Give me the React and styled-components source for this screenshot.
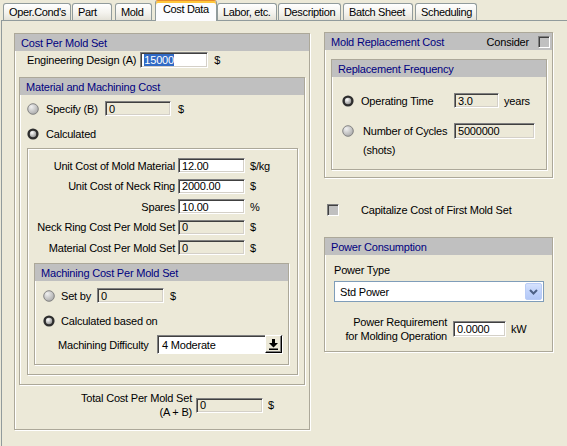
import React from 'react';
import styled, { createGlobalStyle, css } from 'styled-components';

const GlobalStyle = createGlobalStyle`
  html, body { margin: 0; padding: 0; background: #ECE9D8; }
  body {
    font-family: "Liberation Sans", Arial, sans-serif;
    font-size: 11px;
    letter-spacing: -0.2px;
    color: #000;
  }
`;

const Window = styled.div`
  width: 567px;
  height: 446px;
  background: #ECE9D8;
  overflow: hidden;
  display: flex;
  flex-direction: column;
`;

const TabStrip = styled.div`
  display: flex;
  align-items: flex-end;
  height: 20px;
  padding-left: 3px;
  position: relative;
  z-index: 1;
`;

const Tab = styled.div`
  box-sizing: border-box;
  flex: none;
  width: ${p => p.$w}px;
  height: 17px;
  margin-left: ${p => p.$ml}px;
  border: 1px solid #919B9C;
  border-bottom: none;
  border-radius: 3px 3px 0 0;
  background: linear-gradient(#FFFFFF, #F4F3EE 55%, #E4E2D8);
  padding-left: 5px;
  line-height: 16px;
  letter-spacing: -0.35px;
  white-space: nowrap;
  overflow: hidden;
  ${p => p.$active && css`
    height: 21px;
    margin-bottom: -1px;
    padding-left: 7px;
    line-height: 13px;
    background: #FCFCFE;
    border-top: 1px solid #E68B2C;
    box-shadow: inset 0 2px 0 #FFC73C;
    padding-top: 2px;
  `}
`;

const Panel = styled.div`
  flex: 1;
  margin-left: 1px;
  border-top: 1px solid #919B9C;
  border-left: 1px solid #919B9C;
  padding: 12px 0 0 12px;
  display: flex;
  gap: 14px;
  align-items: flex-start;
`;

const Frame = styled.div`
  box-sizing: border-box;
  display: flex;
  flex-direction: column;
  border: 1px solid #ACA899;
  box-shadow: inset 1px 1px 0 #fff, 1px 1px 0 #fff;
  width: ${p => (p.$w ? `${p.$w}px` : 'auto')};
  margin: ${p => p.$m || '0'};
  padding-bottom: ${p => p.$pb || 0}px;
`;

const Band = styled.div`
  height: 17px;
  background: #C0C0C0;
  color: #00007F;
  padding: 0 ${p => p.$pr ?? 6}px 0 6px;
  display: flex;
  align-items: center;
  justify-content: space-between;
  white-space: nowrap;
`;

const BandRight = styled.div`
  display: flex;
  align-items: center;
  gap: 9px;
  color: #000;
`;

const Row = styled.div`
  display: flex;
  align-items: center;
  margin-top: ${p => p.$mt || 0}px;
  padding-left: ${p => p.$pl || 0}px;
  min-height: ${p => p.$h || 15}px;
`;

const Label = styled.span`
  flex: none;
  white-space: nowrap;
  width: ${p => (p.$w ? `${p.$w}px` : 'auto')};
  margin-left: ${p => p.$ml || 0}px;
  text-align: ${p => p.$right ? 'right' : 'left'};
  line-height: 14px;
`;

const Unit = styled.span`
  margin-left: ${p => p.$ml || 0}px;
  white-space: nowrap;
`;

const Field = styled.div`
  box-sizing: border-box;
  flex: none;
  width: ${p => p.$w}px;
  height: ${p => p.$h || 15}px;
  margin-left: ${p => p.$ml || 0}px;
  background: ${p => (p.$disabled ? '#ECE9D8' : '#FFFFFF')};
  border: 1px solid;
  border-color: #808080 #FFFFFF #FFFFFF #808080;
  box-shadow: inset 1px 1px 0 #404040, inset -1px -1px 0 #D4D0C8;
  padding-left: 3px;
  display: flex;
  align-items: center;
  white-space: nowrap;
  overflow: hidden;
`;

const Selected = styled.span`
  background: #316AC5;
  color: #fff;
  line-height: 12px;
`;

const CalcGrid = styled.div`
  display: grid;
  grid-template-columns: 147px 67px auto;
  column-gap: 3px;
  row-gap: 5.5px;
  align-items: center;
  padding-top: 9px;
`;

const GridLabel = styled.span`
  justify-self: end;
  white-space: nowrap;
`;

const GridUnit = styled.span`
  padding-left: 2px;
`;

const TextLine = styled.div`
  margin-top: ${p => p.$mt || 0}px;
  padding-left: ${p => p.$pl || 0}px;
  line-height: 14px;
`;

const Column = styled.div`
  display: flex;
  flex-direction: column;
  width: ${p => p.$w}px;
  margin-top: ${p => p.$mt || 0}px;
`;

const RadioSvg = styled.svg`
  flex: none;
  display: block;
`;

function Radio({ checked }) {
  return (
    <RadioSvg width="12" height="12" viewBox="0 0 12 12">
      <defs>
        <radialGradient id="rgOff" cx="0.35" cy="0.3" r="0.8">
          <stop offset="0" stopColor="#F0F0F0" />
          <stop offset="1" stopColor="#A4A4A4" />
        </radialGradient>
        <radialGradient id="rgOn" cx="0.35" cy="0.3" r="0.8">
          <stop offset="0" stopColor="#FFFFFF" />
          <stop offset="1" stopColor="#8E8E8E" />
        </radialGradient>
      </defs>
      {checked ? (
        <>
          <circle cx="6" cy="6" r="5.6" fill="#2E2E2E" />
          <circle cx="6" cy="6" r="3.2" fill="url(#rgOn)" />
        </>
      ) : (
        <circle cx="6" cy="6" r="5.3" fill="url(#rgOff)" stroke="#7A7A7A" strokeWidth="0.9" />
      )}
    </RadioSvg>
  );
}

const Check = styled.div`
  box-sizing: border-box;
  flex: none;
  width: 12px;
  height: 12px;
  background: #C0C0C0;
  border: 1px solid;
  border-color: #808080 #FFFFFF #FFFFFF #808080;
  box-shadow: inset 1px 1px 0 #404040;
`;

const Combo = styled.div`
  box-sizing: border-box;
  flex: none;
  width: ${p => p.$w}px;
  height: ${p => p.$h}px;
  display: flex;
  align-items: stretch;
  background: #fff;
  border: 1px solid;
  border-color: #808080 #FFFFFF #FFFFFF #808080;
  box-shadow: inset 1px 1px 0 #404040;
`;

const ComboText = styled.div`
  flex: 1;
  display: flex;
  align-items: center;
  padding-left: ${p => p.$pl || 4}px;
  white-space: nowrap;
`;

const ClassicButton = styled.div`
  box-sizing: border-box;
  width: 17px;
  margin-top: -1px;
  background: #ECE9D8;
  border: 1px solid;
  border-color: #FFFFFF #000000 #000000 #FFFFFF;
  box-shadow: inset -1px -1px 0 #808080;
  display: flex;
  align-items: center;
  justify-content: center;
`;

const XPCombo = styled.div`
  box-sizing: border-box;
  width: ${p => p.$w}px;
  height: 21px;
  margin: ${p => p.$m};
  border: 1px solid #7F9DB9;
  background: #fff;
  display: flex;
  align-items: center;
  padding: 1px;
`;

const XPButton = styled.div`
  box-sizing: border-box;
  width: 17px;
  height: 17px;
  border: 1px solid #B9CCF6;
  border-radius: 2px;
  background: linear-gradient(#D6E2FD, #C1D3FB 50%, #B3C8F6);
  display: flex;
  align-items: center;
  justify-content: center;
`;

const tabs = [
  { label: "Oper.Cond's", w: 68, ml: 0 },
  { label: 'Part', w: 40, ml: 1 },
  { label: 'Mold', w: 37, ml: 3 },
  { label: 'Cost Data', w: 62, ml: 3, active: true },
  { label: 'Labor, etc.', w: 60, ml: 0 },
  { label: 'Description', w: 63, ml: 1 },
  { label: 'Batch Sheet', w: 70, ml: 2 },
  { label: 'Scheduling', w: 62, ml: 2 },
];

const calcRows = [
  { label: 'Unit Cost of Mold Material', value: '12.00', unit: '$/kg' },
  { label: 'Unit Cost of Neck Ring', value: '2000.00', unit: '$' },
  { label: 'Spares', value: '10.00', unit: '%' },
  { label: 'Neck Ring Cost Per Mold Set', value: '0', unit: '$', disabled: true },
  { label: 'Material Cost Per Mold Set', value: '0', unit: '$', disabled: true },
];

export default function App() {
  return (
    <Window>
      <GlobalStyle />
      <TabStrip>
        {tabs.map(t => (
          <Tab key={t.label} $w={t.w} $ml={t.ml} $active={t.active}>{t.label}</Tab>
        ))}
      </TabStrip>
      <Panel>
        <Frame $w={296} $pb={10}>
          <Band>Cost Per Mold Set</Band>
          <Row $mt={1} $pl={12} $h={16}>
            <Label>Engineering Design (A)</Label>
            <Field $w={68} $h={16} $ml={4}><Selected>15000</Selected></Field>
            <Unit $ml={6}>$</Unit>
          </Row>

          <Frame $m="9px 4px 0 4px" $pb={9}>
            <Band>Material and Machining Cost</Band>
            <Row $mt={6} $pl={7}>
              <Radio />
              <Label $ml={7} $w={59}>Specify (B)</Label>
              <Field $w={66} $disabled>0</Field>
              <Unit $ml={7}>$</Unit>
            </Row>
            <Row $mt={10} $pl={7}>
              <Radio checked />
              <Label $ml={7}>Calculated</Label>
            </Row>

            <Frame $m="7px 6px 0 7px" $pb={9}>
              <CalcGrid>
                {calcRows.map(r => (
                  <React.Fragment key={r.label}>
                    <GridLabel>{r.label}</GridLabel>
                    <Field $w={67} $disabled={r.disabled}>{r.value}</Field>
                    <GridUnit>{r.unit}</GridUnit>
                  </React.Fragment>
                ))}
              </CalcGrid>

              <Frame $m="8px 8px 0 6px" $pb={10}>
                <Band>Machining Cost Per Mold Set</Band>
                <Row $mt={7} $pl={8}>
                  <Radio />
                  <Label $ml={6} $w={36}>Set by</Label>
                  <Field $w={67} $disabled>0</Field>
                  <Unit $ml={6}>$</Unit>
                </Row>
                <Row $mt={10} $pl={8}>
                  <Radio checked />
                  <Label $ml={6}>Calculated based on</Label>
                </Row>
                <Row $mt={7} $pl={23} $h={19}>
                  <Label $w={99}>Machining Difficulty</Label>
                  <Combo $w={126} $h={19}>
                    <ComboText>4 Moderate</ComboText>
                    <ClassicButton>
                      <svg width="9" height="11" viewBox="0 0 9 11">
                        <path d="M3 0h3v4h3L4.5 8.5 0 4h3z" fill="#000" />
                        <rect x="0" y="9.5" width="9" height="1.5" fill="#000" />
                      </svg>
                    </ClassicButton>
                  </Combo>
                </Row>
              </Frame>
            </Frame>
          </Frame>

          <Row $mt={6} $h={28}>
            <Label $w={177} $right>Total Cost Per Mold Set<br />(A + B)</Label>
            <Field $w={67} $ml={4} $disabled>0</Field>
            <Unit $ml={5}>$</Unit>
          </Row>
        </Frame>

        <Column $w={229} $mt={-1}>
          <Frame $pb={7}>
            <Band $pr={2}>
              <span>Mold Replacement Cost</span>
              <BandRight>
                <span>Consider</span>
                <Check />
              </BandRight>
            </Band>
            <Frame $m="9px 5px 0 6px" $pb={12}>
              <Band>Replacement Frequency</Band>
              <Row $mt={16} $pl={10}>
                <Radio checked />
                <Label $ml={7} $w={93}>Operating Time</Label>
                <Field $w={45} $disabled>3.0</Field>
                <Unit $ml={5}>years</Unit>
              </Row>
              <Row $mt={15} $pl={10} $h={16}>
                <Radio />
                <Label $ml={9} $w={91}>Number of Cycles</Label>
                <Field $w={81} $h={16} $disabled>5000000</Field>
              </Row>
              <TextLine $mt={4} $pl={31}>(shots)</TextLine>
            </Frame>
          </Frame>

          <Row $mt={25} $pl={3} $h={12}>
            <Check />
            <Label $ml={22}>Capitalize Cost of First Mold Set</Label>
          </Row>

          <Frame $m="20px 0 0 0" $pb={8}>
            <Band>Power Consumption</Band>
            <TextLine $mt={8} $pl={9}>Power Type</TextLine>
            <XPCombo $w={210} $m="4px 0 0 9px">
              <ComboText $pl={4}>Std Power</ComboText>
              <XPButton>
                <svg width="9" height="6" viewBox="0 0 9 6">
                  <polyline points="1,1 4.5,4.5 8,1" fill="none" stroke="#4D6185" strokeWidth="2" />
                </svg>
              </XPButton>
            </XPCombo>
            <Row $mt={13} $h={28}>
              <Label $w={122} $right>Power Requirement<br />for Molding Operation</Label>
              <Field $w={53} $h={16} $ml={6}>0.0000</Field>
              <Unit $ml={5}>kW</Unit>
            </Row>
          </Frame>
        </Column>
      </Panel>
    </Window>
  );
}
